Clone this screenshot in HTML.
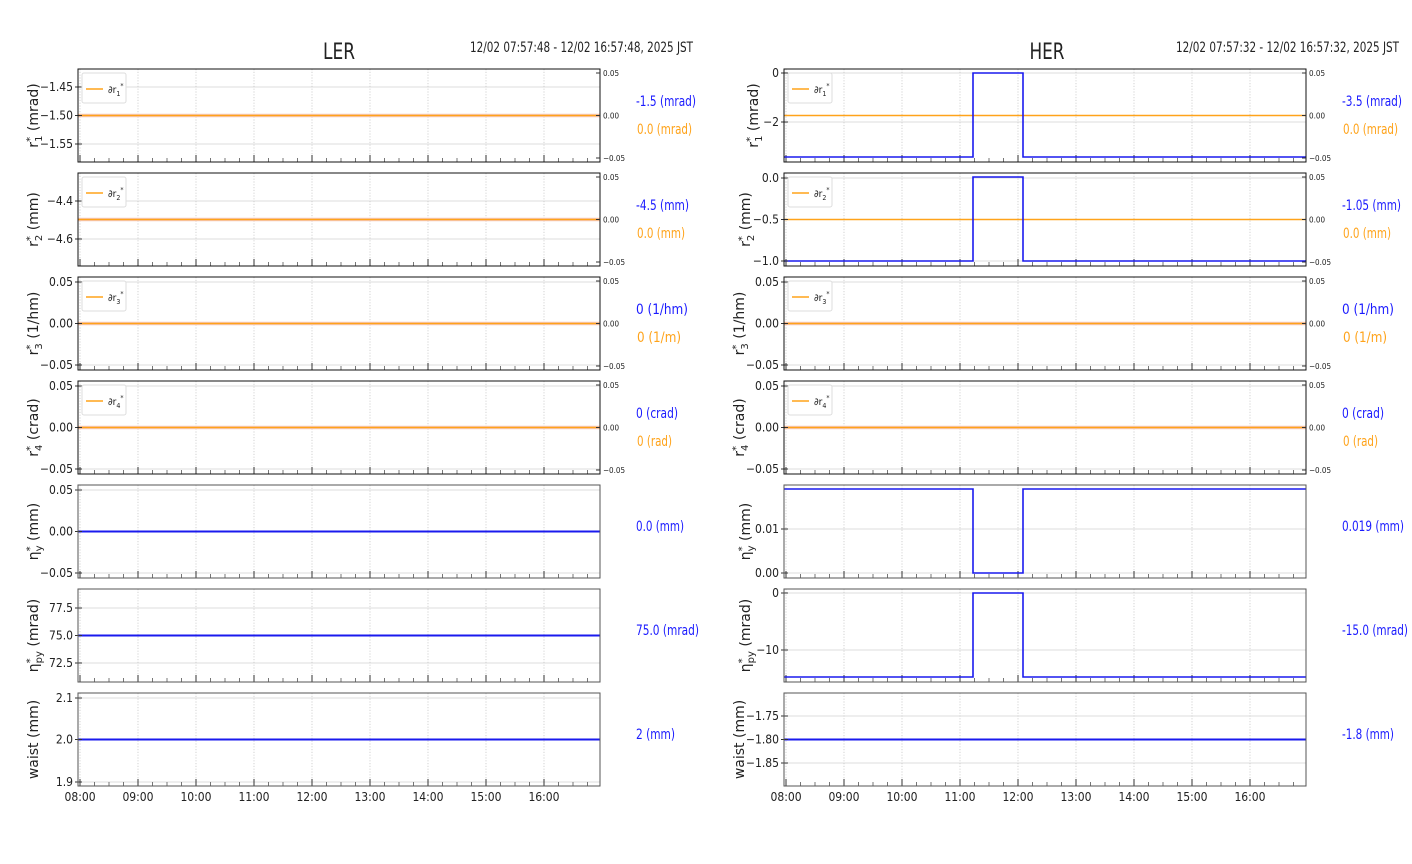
<!DOCTYPE html>
<html><head><meta charset="utf-8"><style>
html,body{margin:0;padding:0;background:#fff;width:1412px;height:864px;overflow:hidden}
svg{display:block}
text{font-family:"Liberation Sans Narrow","DejaVu Sans Condensed","DejaVu Sans","Liberation Sans",sans-serif;font-stretch:condensed;fill:#222}
.t{font-size:12px}
.r{font-size:8px}
.yl{font-family:"DejaVu Sans","Liberation Sans",sans-serif;font-stretch:normal;font-size:14px}
.sv{font-size:14px}
.lg{font-size:10px}
</style></head><body>
<svg width="1412" height="864" viewBox="0 0 1412 864" xmlns="http://www.w3.org/2000/svg">
<defs>
<g id="bg">
<path d="M2 0V93M60 0V93M118 0V93M176 0V93M234 0V93M292 0V93M350 0V93M408 0V93M466 0V93" stroke="#c8c8c8" stroke-width="0.8" stroke-dasharray="1.2,1.6"/>
<path d="M2 93v-7M60 93v-7M118 93v-7M176 93v-7M234 93v-7M292 93v-7M350 93v-7M408 93v-7M466 93v-7" stroke="#333" stroke-width="1"/>
<path d="M16.5 93v-4M31 93v-4M45.5 93v-4M74.5 93v-4M89 93v-4M103.5 93v-4M132.5 93v-4M147 93v-4M161.5 93v-4M190.5 93v-4M205 93v-4M219.5 93v-4M248.5 93v-4M263 93v-4M277.5 93v-4M306.5 93v-4M321 93v-4M335.5 93v-4M364.5 93v-4M379 93v-4M393.5 93v-4M422.5 93v-4M437 93v-4M451.5 93v-4M480.5 93v-4M495 93v-4M509.5 93v-4" stroke="#555" stroke-width="0.8"/>
</g>
<g id="rax">
<path d="M522 4h-4M522 46.5h-4M522 89h-4" stroke="#333"/>
<text class="r" x="525" y="7">0.05</text>
<text class="r" x="525" y="49.5">0.00</text>
<text class="r" x="525" y="92">−0.05</text>
</g>
<g id="leg"><rect x="4" y="4" width="44" height="30" rx="2" fill="#fff" stroke="#ddd"/><path d="M8 20h17" stroke="#ffa31a" stroke-width="1.5"/></g>
<g id="ol"><path d="M0 46.5H522" stroke="#f6c9c0" stroke-width="3.5"/><path d="M0 46.5H522" stroke="#ffa31a" stroke-width="1.6"/></g>
</defs>

<text x="339" y="59" text-anchor="middle" style="font-size:22px" textLength="32" lengthAdjust="spacingAndGlyphs">LER</text>
<text x="470" y="52" class="sv" textLength="223" lengthAdjust="spacingAndGlyphs">12/02 07:57:48 - 12/02 16:57:48, 2025 JST</text>
<text x="1047" y="59" text-anchor="middle" style="font-size:22px" textLength="35" lengthAdjust="spacingAndGlyphs">HER</text>
<text x="1176" y="52" class="sv" textLength="223" lengthAdjust="spacingAndGlyphs">12/02 07:57:32 - 12/02 16:57:32, 2025 JST</text>

<!-- LEFT -->
<g transform="translate(78,69)">
<path d="M0 18H522M0 75H522" stroke="#ddd"/><use href="#bg"/>
<use href="#ol"/>
<path d="M-3 18h7M-3 46.5h7M-3 75h7" stroke="#333"/>
<text class="t" x="-5" y="22" text-anchor="end">−1.45</text><text class="t" x="-5" y="50.5" text-anchor="end">−1.50</text><text class="t" x="-5" y="79" text-anchor="end">−1.55</text>
<rect width="522" height="93" fill="none" stroke="#111"/><use href="#rax"/>
<use href="#leg"/><text class="lg" x="30" y="24">∂r<tspan dy="3" font-size="7">1</tspan><tspan dy="-8" font-size="7">*</tspan></text>
<text class="yl" transform="translate(-40,46.5) rotate(-90)" text-anchor="middle">r<tspan font-size="10" dy="-5">*</tspan><tspan font-size="10" dx="-5" dy="9">1</tspan><tspan dy="-4"> (mrad)</tspan></text>
<text class="sv" x="558" y="37" style="fill:#1a1aff" textLength="60" lengthAdjust="spacingAndGlyphs">-1.5 (mrad)</text>
<text class="sv" x="559" y="65" style="fill:#ffa31a" textLength="55" lengthAdjust="spacingAndGlyphs">0.0 (mrad)</text>
</g>
<g transform="translate(78,173)">
<path d="M0 28H522M0 66H522" stroke="#ddd"/><use href="#bg"/>
<use href="#ol"/>
<path d="M-3 28h7M-3 66h7" stroke="#333"/>
<text class="t" x="-5" y="32" text-anchor="end">−4.4</text><text class="t" x="-5" y="70" text-anchor="end">−4.6</text>
<rect width="522" height="93" fill="none" stroke="#111"/><use href="#rax"/>
<use href="#leg"/><text class="lg" x="30" y="24">∂r<tspan dy="3" font-size="7">2</tspan><tspan dy="-8" font-size="7">*</tspan></text>
<text class="yl" transform="translate(-40,46.5) rotate(-90)" text-anchor="middle">r<tspan font-size="10" dy="-5">*</tspan><tspan font-size="10" dx="-5" dy="9">2</tspan><tspan dy="-4"> (mm)</tspan></text>
<text class="sv" x="558" y="37" style="fill:#1a1aff" textLength="53" lengthAdjust="spacingAndGlyphs">-4.5 (mm)</text>
<text class="sv" x="559" y="65" style="fill:#ffa31a" textLength="48" lengthAdjust="spacingAndGlyphs">0.0 (mm)</text>
</g>
<g transform="translate(78,277)">
<path d="M0 5H522M0 88H522" stroke="#ddd"/><use href="#bg"/>
<use href="#ol"/>
<path d="M-3 5h7M-3 46.5h7M-3 88h7" stroke="#333"/>
<text class="t" x="-5" y="9" text-anchor="end">0.05</text><text class="t" x="-5" y="50.5" text-anchor="end">0.00</text><text class="t" x="-5" y="92" text-anchor="end">−0.05</text>
<rect width="522" height="93" fill="none" stroke="#111"/><use href="#rax"/>
<use href="#leg"/><text class="lg" x="30" y="24">∂r<tspan dy="3" font-size="7">3</tspan><tspan dy="-8" font-size="7">*</tspan></text>
<text class="yl" transform="translate(-40,46.5) rotate(-90)" text-anchor="middle">r<tspan font-size="10" dy="-5">*</tspan><tspan font-size="10" dx="-5" dy="9">3</tspan><tspan dy="-4"> (1/hm)</tspan></text>
<text class="sv" x="558" y="37" style="fill:#1a1aff" textLength="52" lengthAdjust="spacingAndGlyphs">0 (1/hm)</text>
<text class="sv" x="559" y="65" style="fill:#ffa31a" textLength="44" lengthAdjust="spacingAndGlyphs">0 (1/m)</text>
</g>
<g transform="translate(78,381)">
<path d="M0 5H522M0 88H522" stroke="#ddd"/><use href="#bg"/>
<use href="#ol"/>
<path d="M-3 5h7M-3 46.5h7M-3 88h7" stroke="#333"/>
<text class="t" x="-5" y="9" text-anchor="end">0.05</text><text class="t" x="-5" y="50.5" text-anchor="end">0.00</text><text class="t" x="-5" y="92" text-anchor="end">−0.05</text>
<rect width="522" height="93" fill="none" stroke="#111"/><use href="#rax"/>
<use href="#leg"/><text class="lg" x="30" y="24">∂r<tspan dy="3" font-size="7">4</tspan><tspan dy="-8" font-size="7">*</tspan></text>
<text class="yl" transform="translate(-40,46.5) rotate(-90)" text-anchor="middle">r<tspan font-size="10" dy="-5">*</tspan><tspan font-size="10" dx="-5" dy="9">4</tspan><tspan dy="-4"> (crad)</tspan></text>
<text class="sv" x="558" y="37" style="fill:#1a1aff" textLength="42" lengthAdjust="spacingAndGlyphs">0 (crad)</text>
<text class="sv" x="559" y="65" style="fill:#ffa31a" textLength="35" lengthAdjust="spacingAndGlyphs">0 (rad)</text>
</g>
<g transform="translate(78,485)">
<path d="M0 5H522M0 88H522" stroke="#ddd"/><use href="#bg"/>
<path d="M0 46.5H522" stroke="#1a1aee" stroke-width="2"/>
<path d="M-3 5h7M-3 46.5h7M-3 88h7" stroke="#333"/>
<text class="t" x="-5" y="9" text-anchor="end">0.05</text><text class="t" x="-5" y="50.5" text-anchor="end">0.00</text><text class="t" x="-5" y="92" text-anchor="end">−0.05</text>
<rect width="522" height="93" fill="none" stroke="#555"/>
<text class="yl" transform="translate(-40,46.5) rotate(-90)" text-anchor="middle">η<tspan font-size="10" dy="-5">*</tspan><tspan font-size="10" dx="-5" dy="9">y</tspan><tspan dy="-4"> (mm)</tspan></text>
<text class="sv" x="558" y="46" style="fill:#1a1aff" textLength="48" lengthAdjust="spacingAndGlyphs">0.0 (mm)</text>
</g>
<g transform="translate(78,589)">
<path d="M0 19H522M0 74H522" stroke="#ddd"/><use href="#bg"/>
<path d="M0 46.5H522" stroke="#1a1aee" stroke-width="2"/>
<path d="M-3 19h7M-3 46.5h7M-3 74h7" stroke="#333"/>
<text class="t" x="-5" y="23" text-anchor="end">77.5</text><text class="t" x="-5" y="50.5" text-anchor="end">75.0</text><text class="t" x="-5" y="78" text-anchor="end">72.5</text>
<rect width="522" height="93" fill="none" stroke="#555"/>
<text class="yl" transform="translate(-40,46.5) rotate(-90)" text-anchor="middle">η<tspan font-size="10" dy="-5">*</tspan><tspan font-size="10" dx="-5" dy="9">py</tspan><tspan dy="-4"> (mrad)</tspan></text>
<text class="sv" x="558" y="46" style="fill:#1a1aff" textLength="63" lengthAdjust="spacingAndGlyphs">75.0 (mrad)</text>
</g>
<g transform="translate(78,693)">
<path d="M0 5H522M0 89H522" stroke="#ddd"/><use href="#bg"/>
<path d="M0 46.5H522" stroke="#1a1aee" stroke-width="2"/>
<path d="M-3 5h7M-3 46.5h7M-3 89h7" stroke="#333"/>
<text class="t" x="-5" y="9" text-anchor="end">2.1</text><text class="t" x="-5" y="50.5" text-anchor="end">2.0</text><text class="t" x="-5" y="93" text-anchor="end">1.9</text>
<rect width="522" height="93" fill="none" stroke="#555"/>
<text class="yl" transform="translate(-40,46.5) rotate(-90)" text-anchor="middle">waist (mm)</text>
<text class="sv" x="558" y="46" style="fill:#1a1aff" textLength="39" lengthAdjust="spacingAndGlyphs">2 (mm)</text>
<g class="t" text-anchor="middle">
<text x="2" y="108">08:00</text><text x="60" y="108">09:00</text><text x="118" y="108">10:00</text><text x="176" y="108">11:00</text><text x="234" y="108">12:00</text><text x="292" y="108">13:00</text><text x="350" y="108">14:00</text><text x="408" y="108">15:00</text><text x="466" y="108">16:00</text>
</g>
</g>

<!-- RIGHT -->
<g transform="translate(784,69)">
<path d="M0 4H522M0 53H522" stroke="#ddd"/><use href="#bg"/>
<path d="M0 46.5H522" stroke="#ffa31a" stroke-width="1.6"/>
<path d="M0 88H189V4H239V88H522" fill="none" stroke="#1a1aee" stroke-width="1.6"/>
<path d="M-3 4h7M-3 53h7" stroke="#333"/>
<text class="t" x="-5" y="8" text-anchor="end">0</text><text class="t" x="-5" y="57" text-anchor="end">−2</text>
<rect width="522" height="93" fill="none" stroke="#111"/><use href="#rax"/>
<use href="#leg"/><text class="lg" x="30" y="24">∂r<tspan dy="3" font-size="7">1</tspan><tspan dy="-8" font-size="7">*</tspan></text>
<text class="yl" transform="translate(-26,46.5) rotate(-90)" text-anchor="middle">r<tspan font-size="10" dy="-5">*</tspan><tspan font-size="10" dx="-5" dy="9">1</tspan><tspan dy="-4"> (mrad)</tspan></text>
<text class="sv" x="558" y="37" style="fill:#1a1aff" textLength="60" lengthAdjust="spacingAndGlyphs">-3.5 (mrad)</text>
<text class="sv" x="559" y="65" style="fill:#ffa31a" textLength="55" lengthAdjust="spacingAndGlyphs">0.0 (mrad)</text>
</g>
<g transform="translate(784,173)">
<path d="M0 5H522M0 46.5H522M0 88H522" stroke="#ddd"/><use href="#bg"/>
<path d="M0 46.5H522" stroke="#ffa31a" stroke-width="1.6"/>
<path d="M0 88H189V4H239V88H522" fill="none" stroke="#1a1aee" stroke-width="1.6"/>
<path d="M-3 5h7M-3 46.5h7M-3 88h7" stroke="#333"/>
<text class="t" x="-5" y="9" text-anchor="end">0.0</text><text class="t" x="-5" y="50.5" text-anchor="end">−0.5</text><text class="t" x="-5" y="92" text-anchor="end">−1.0</text>
<rect width="522" height="93" fill="none" stroke="#111"/><use href="#rax"/>
<use href="#leg"/><text class="lg" x="30" y="24">∂r<tspan dy="3" font-size="7">2</tspan><tspan dy="-8" font-size="7">*</tspan></text>
<text class="yl" transform="translate(-34,46.5) rotate(-90)" text-anchor="middle">r<tspan font-size="10" dy="-5">*</tspan><tspan font-size="10" dx="-5" dy="9">2</tspan><tspan dy="-4"> (mm)</tspan></text>
<text class="sv" x="558" y="37" style="fill:#1a1aff" textLength="59" lengthAdjust="spacingAndGlyphs">-1.05 (mm)</text>
<text class="sv" x="559" y="65" style="fill:#ffa31a" textLength="48" lengthAdjust="spacingAndGlyphs">0.0 (mm)</text>
</g>
<g transform="translate(784,277)">
<path d="M0 5H522M0 88H522" stroke="#ddd"/><use href="#bg"/>
<use href="#ol"/>
<path d="M-3 5h7M-3 46.5h7M-3 88h7" stroke="#333"/>
<text class="t" x="-5" y="9" text-anchor="end">0.05</text><text class="t" x="-5" y="50.5" text-anchor="end">0.00</text><text class="t" x="-5" y="92" text-anchor="end">−0.05</text>
<rect width="522" height="93" fill="none" stroke="#111"/><use href="#rax"/>
<use href="#leg"/><text class="lg" x="30" y="24">∂r<tspan dy="3" font-size="7">3</tspan><tspan dy="-8" font-size="7">*</tspan></text>
<text class="yl" transform="translate(-40,46.5) rotate(-90)" text-anchor="middle">r<tspan font-size="10" dy="-5">*</tspan><tspan font-size="10" dx="-5" dy="9">3</tspan><tspan dy="-4"> (1/hm)</tspan></text>
<text class="sv" x="558" y="37" style="fill:#1a1aff" textLength="52" lengthAdjust="spacingAndGlyphs">0 (1/hm)</text>
<text class="sv" x="559" y="65" style="fill:#ffa31a" textLength="44" lengthAdjust="spacingAndGlyphs">0 (1/m)</text>
</g>
<g transform="translate(784,381)">
<path d="M0 5H522M0 88H522" stroke="#ddd"/><use href="#bg"/>
<use href="#ol"/>
<path d="M-3 5h7M-3 46.5h7M-3 88h7" stroke="#333"/>
<text class="t" x="-5" y="9" text-anchor="end">0.05</text><text class="t" x="-5" y="50.5" text-anchor="end">0.00</text><text class="t" x="-5" y="92" text-anchor="end">−0.05</text>
<rect width="522" height="93" fill="none" stroke="#111"/><use href="#rax"/>
<use href="#leg"/><text class="lg" x="30" y="24">∂r<tspan dy="3" font-size="7">4</tspan><tspan dy="-8" font-size="7">*</tspan></text>
<text class="yl" transform="translate(-40,46.5) rotate(-90)" text-anchor="middle">r<tspan font-size="10" dy="-5">*</tspan><tspan font-size="10" dx="-5" dy="9">4</tspan><tspan dy="-4"> (crad)</tspan></text>
<text class="sv" x="558" y="37" style="fill:#1a1aff" textLength="42" lengthAdjust="spacingAndGlyphs">0 (crad)</text>
<text class="sv" x="559" y="65" style="fill:#ffa31a" textLength="35" lengthAdjust="spacingAndGlyphs">0 (rad)</text>
</g>
<g transform="translate(784,485)">
<path d="M0 44H522M0 88H522" stroke="#ddd"/><use href="#bg"/>
<path d="M0 4H189V88H239V4H522" fill="none" stroke="#1a1aee" stroke-width="1.6"/>
<path d="M-3 44h7M-3 88h7" stroke="#333"/>
<text class="t" x="-5" y="48" text-anchor="end">0.01</text><text class="t" x="-5" y="92" text-anchor="end">0.00</text>
<rect width="522" height="93" fill="none" stroke="#555"/>
<text class="yl" transform="translate(-34,46.5) rotate(-90)" text-anchor="middle">η<tspan font-size="10" dy="-5">*</tspan><tspan font-size="10" dx="-5" dy="9">y</tspan><tspan dy="-4"> (mm)</tspan></text>
<text class="sv" x="558" y="46" style="fill:#1a1aff" textLength="62" lengthAdjust="spacingAndGlyphs">0.019 (mm)</text>
</g>
<g transform="translate(784,589)">
<path d="M0 4H522M0 61H522" stroke="#ddd"/><use href="#bg"/>
<path d="M0 88H189V4H239V88H522" fill="none" stroke="#1a1aee" stroke-width="1.6"/>
<path d="M-3 4h7M-3 61h7" stroke="#333"/>
<text class="t" x="-5" y="8" text-anchor="end">0</text><text class="t" x="-5" y="65" text-anchor="end">−10</text>
<rect width="522" height="93" fill="none" stroke="#555"/>
<text class="yl" transform="translate(-34,46.5) rotate(-90)" text-anchor="middle">η<tspan font-size="10" dy="-5">*</tspan><tspan font-size="10" dx="-5" dy="9">py</tspan><tspan dy="-4"> (mrad)</tspan></text>
<text class="sv" x="558" y="46" style="fill:#1a1aff" textLength="66" lengthAdjust="spacingAndGlyphs">-15.0 (mrad)</text>
</g>
<g transform="translate(784,693)">
<path d="M0 23H522M0 70H522" stroke="#ddd"/><use href="#bg"/>
<path d="M0 46.5H522" stroke="#1a1aee" stroke-width="2"/>
<path d="M-3 23h7M-3 46.5h7M-3 70h7" stroke="#333"/>
<text class="t" x="-5" y="27" text-anchor="end">−1.75</text><text class="t" x="-5" y="50.5" text-anchor="end">−1.80</text><text class="t" x="-5" y="74" text-anchor="end">−1.85</text>
<rect width="522" height="93" fill="none" stroke="#555"/>
<text class="yl" transform="translate(-40,46.5) rotate(-90)" text-anchor="middle">waist (mm)</text>
<text class="sv" x="558" y="46" style="fill:#1a1aff" textLength="52" lengthAdjust="spacingAndGlyphs">-1.8 (mm)</text>
<g class="t" text-anchor="middle">
<text x="2" y="108">08:00</text><text x="60" y="108">09:00</text><text x="118" y="108">10:00</text><text x="176" y="108">11:00</text><text x="234" y="108">12:00</text><text x="292" y="108">13:00</text><text x="350" y="108">14:00</text><text x="408" y="108">15:00</text><text x="466" y="108">16:00</text>
</g>
</g>
</svg>
</body></html>
